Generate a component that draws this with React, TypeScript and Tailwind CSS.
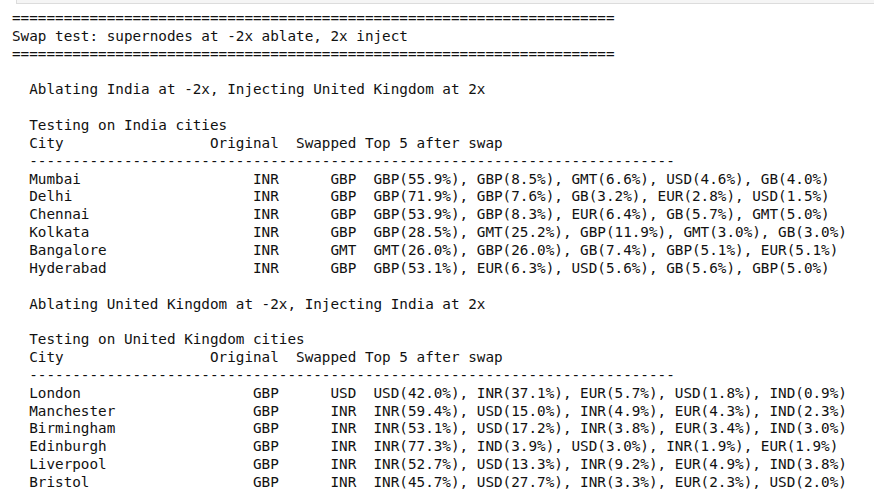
const eq = "=".repeat(70)
const dash = "-".repeat(75)

const header = "  " + "City".padEnd(20) + " " + "Original".padStart(8) + "  " + "Swapped" + " Top 5 after swap"

const row = (city: string, orig: string, swapped: string, top: string) =>
  "  " + city.padEnd(20) + " " + orig.padStart(8) + "  " + swapped.padStart(7) + "  " + top

const india = [
  ["Mumbai", "INR", "GBP", "GBP(55.9%), GBP(8.5%), GMT(6.6%), USD(4.6%), GB(4.0%)"],
  ["Delhi", "INR", "GBP", "GBP(71.9%), GBP(7.6%), GB(3.2%), EUR(2.8%), USD(1.5%)"],
  ["Chennai", "INR", "GBP", "GBP(53.9%), GBP(8.3%), EUR(6.4%), GB(5.7%), GMT(5.0%)"],
  ["Kolkata", "INR", "GBP", "GBP(28.5%), GMT(25.2%), GBP(11.9%), GMT(3.0%), GB(3.0%)"],
  ["Bangalore", "INR", "GMT", "GMT(26.0%), GBP(26.0%), GB(7.4%), GBP(5.1%), EUR(5.1%)"],
  ["Hyderabad", "INR", "GBP", "GBP(53.1%), EUR(6.3%), USD(5.6%), GB(5.6%), GBP(5.0%)"],
]

const uk = [
  ["London", "GBP", "USD", "USD(42.0%), INR(37.1%), EUR(5.7%), USD(1.8%), IND(0.9%)"],
  ["Manchester", "GBP", "INR", "INR(59.4%), USD(15.0%), INR(4.9%), EUR(4.3%), IND(2.3%)"],
  ["Birmingham", "GBP", "INR", "INR(53.1%), USD(17.2%), INR(3.8%), EUR(3.4%), IND(3.0%)"],
  ["Edinburgh", "GBP", "INR", "INR(77.3%), IND(3.9%), USD(3.0%), INR(1.9%), EUR(1.9%)"],
  ["Liverpool", "GBP", "INR", "INR(52.7%), USD(13.3%), INR(9.2%), EUR(4.9%), IND(3.8%)"],
  ["Bristol", "GBP", "INR", "INR(45.7%), USD(27.7%), INR(3.3%), EUR(2.3%), USD(2.0%)"],
]

const lines = [
  eq,
  "Swap test: supernodes at -2x ablate, 2x inject",
  eq,
  "",
  "  Ablating India at -2x, Injecting United Kingdom at 2x",
  "",
  "  Testing on India cities",
  header,
  "  " + dash,
  ...india.map((r) => row(r[0], r[1], r[2], r[3])),
  "",
  "  Ablating United Kingdom at -2x, Injecting India at 2x",
  "",
  "  Testing on United Kingdom cities",
  header,
  "  " + dash,
  ...uk.map((r) => row(r[0], r[1], r[2], r[3])),
]

export default function App() {
  return (
    <div className="w-[874px] h-[503px] overflow-hidden bg-white">
      {/* tail of the input cell above */}
      <div className="ml-[16px] h-[4px] bg-[#f5f5f5] border-l border-b border-[#dcdcdc]" />
      <pre className="mt-[6px] pl-[12px] font-['DejaVu_Sans_Mono','Liberation_Mono',monospace] text-[14.3px] leading-[17.85px] text-[#111] whitespace-pre">
        {lines.join("\n")}
      </pre>
    </div>
  )
}
